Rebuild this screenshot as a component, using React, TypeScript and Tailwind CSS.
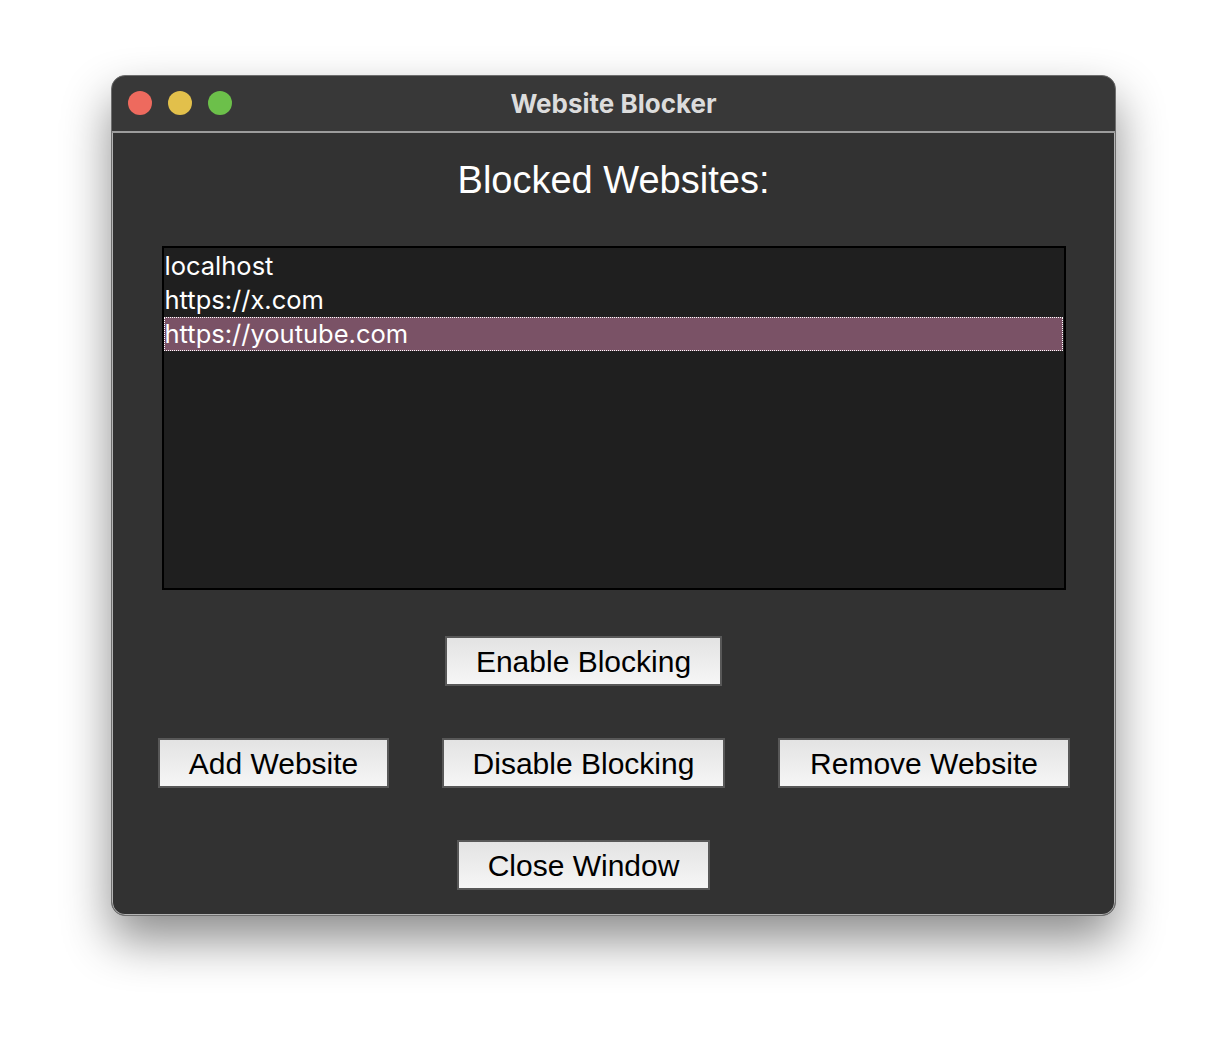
import React from "react";

const btn =
  "h-[50px] border-2 border-[#585858] bg-gradient-to-b from-[#e3e3e3] to-[#f6f6f6] text-black text-[30px] leading-none flex items-center justify-center pt-[2px] [font-family:'Liberation_Sans',Arial,sans-serif]";

export default function App() {
  return (
    <div className="w-[1228px] h-[1064px] bg-white pt-[75px] pl-[111px]">
      <div className="w-[1005px] h-[841px] rounded-[14px] border border-[#6e6e6e] bg-[#323232] shadow-[0_24px_48px_rgba(0,0,0,0.45),inset_0_0_0_1px_#b4b4b4] overflow-hidden flex flex-col">
        <div className="h-[57px] shrink-0 bg-[#383838] border-b-2 border-[#9c9c9c] relative flex items-center justify-center">
          <div className="absolute left-[16px] top-[15px] flex gap-[16px]">
            <div className="w-[24px] h-[24px] rounded-full bg-[#ee6a5e]" />
            <div className="w-[24px] h-[24px] rounded-full bg-[#e2c04b]" />
            <div className="w-[24px] h-[24px] rounded-full bg-[#6cc04a]" />
          </div>
          <div className="text-[#dcdcdc] font-bold text-[26px] [font-family:Inter,'Noto_Sans',sans-serif]">
            Website Blocker
          </div>
        </div>
        <div className="flex flex-col items-center pt-[25px]">
          <div className="text-white text-[38px] leading-[44px] [font-family:'Liberation_Sans',Arial,sans-serif]">
            Blocked Websites:
          </div>
          <div className="mt-[44px] w-[904px] h-[344px] border-2 border-black bg-[#1f1f1f] py-[1px] [font-family:Inter,'Noto_Sans',sans-serif] text-white text-[25.5px]">
            <div className="h-[34px] leading-[32px] border border-transparent">localhost</div>
            <div className="h-[34px] leading-[32px] border border-transparent">https://x.com</div>
            <div className="h-[34px] leading-[32px] mr-[1px] bg-[#7a5266] border border-dotted border-white">https://youtube.com</div>
          </div>
          <div className="mt-[46px] grid grid-cols-[231px_283px_292px] gap-x-[53px] gap-y-[52px] ml-[1px]">
            <div />
            <div className={btn + " justify-self-center w-[277px]"}>Enable Blocking</div>
            <div />
            <div className={btn + " w-[231px]"}>Add Website</div>
            <div className={btn + " w-[283px]"}>Disable Blocking</div>
            <div className={btn + " w-[292px]"}>Remove Website</div>
            <div />
            <div className={btn + " justify-self-center w-[253px]"}>Close Window</div>
            <div />
          </div>
        </div>
      </div>
    </div>
  );
}
